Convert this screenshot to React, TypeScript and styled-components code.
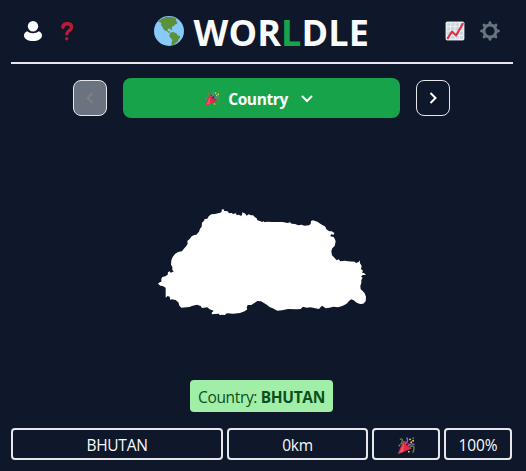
import React from "react";
import styled, { createGlobalStyle } from "styled-components";

const GlobalStyle = createGlobalStyle`
  * { box-sizing: border-box; }
  body {
    margin: 0;
    background: #0f172a;
    color: #f8fafc;
    font-family: "Open Sans", "Noto Sans", sans-serif;
    font-size: 15.5px;
    line-height: 24px;
  }
`;

const Page = styled.main`
  width: 502px;
  height: 471px;
  margin-left: 11px;
  display: flex;
  flex-direction: column;
  overflow: hidden;
`;

const Header = styled.header`
  height: 64px;
  flex: none;
  display: flex;
  align-items: center;
  justify-content: space-between;
  border-bottom: 2px solid #e5e7eb;
  padding: 0 13px 0 12px;
`;

const IconGroup = styled.div<{ $gap: number }>`
  display: flex;
  align-items: center;
  gap: ${(p) => p.$gap}px;
`;

const Brand = styled.div`
  display: flex;
  align-items: center;
  gap: 10px;
`;

const Title = styled.h1`
  margin: 3px 0 0;
  width: 175px;
  font-size: 36px;
  line-height: 40px;
  font-weight: 700;
  letter-spacing: 0.1px;
  white-space: nowrap;
`;

const Accent = styled.span`
  color: #16a34a;
`;

const RoundNav = styled.nav`
  display: flex;
  align-items: center;
  justify-content: center;
  gap: 16px;
  height: 40px;
  margin: 14px 1px 0 0;
  flex: none;
`;

const NavButton = styled.button`
  width: 34px;
  height: 36px;
  padding: 0;
  display: grid;
  place-items: center;
  border: 1px solid #e5e7eb;
  border-radius: 8px;
  background: transparent;
  color: #fff;
  &:disabled {
    background: #6b7280;
    color: #827f7d;
  }
`;

const RoundButton = styled.button`
  width: 277px;
  height: 40px;
  display: flex;
  align-items: center;
  padding: 1px 0 0 82px;
  border: 0;
  border-radius: 8px;
  background: #16a34a;
  color: #fff;
  font: 700 15.5px/24px "Open Sans", "Noto Sans", sans-serif;
`;

const RoundName = styled.span`
  margin: 0 12px 0 8px;
  width: 60px;
  letter-spacing: -0.4px;
  white-space: nowrap;
`;

const Shape = styled.div`
  height: 125px;
  margin: 82px 0 55px 139px;
  flex: none;
`;

const Answer = styled.div`
  align-self: center;
  width: 143px;
  height: 32px;
  margin-right: 1px;
  padding: 5px 0 0;
  border-radius: 4px;
  background: #a0eea8;
  color: #0b4f1a;
  text-align: center;
  letter-spacing: -0.35px;
  white-space: nowrap;
  flex: none;
`;

const GuessRow = styled.div`
  display: grid;
  grid-template-columns: 212px 141px 68px 68px;
  gap: 4px;
  margin-top: 16px;
`;

const Cell = styled.div<{ $tracking?: number }>`
  height: 32px;
  display: flex;
  align-items: center;
  justify-content: center;
  border: 2px solid #e5e7eb;
  border-radius: 4px;
  padding-top: 2px;
  letter-spacing: ${(p) => p.$tracking ?? 0}px;
`;

const UserIcon = () => (
  <svg width="20" height="22" viewBox="0 0 20 22" fill="#fff">
    <circle cx="10" cy="6.2" r="5.2" />
    <path d="M4.2 11.3C2.2 12 1 13.6 1 15.4C1 18.6 5 21 10 21S19 18.6 19 15.4C19 13.6 17.8 12 15.8 11.3C14.3 12.6 12.3 13.2 10 13.2S5.7 12.6 4.2 11.3Z" />
  </svg>
);

const QuestionIcon = () => (
  <svg width="20" height="20" viewBox="0 0 20 20">
    <path
      d="M5.9 6.2C6.2 3.7 7.9 2.7 10.2 2.7C13.1 2.7 14.6 4.3 14.6 6.3C14.6 9.9 9.9 9.3 9.8 12.9"
      fill="none"
      stroke="#be1931"
      strokeWidth="3.4"
      strokeLinecap="round"
    />
    <circle cx="9.7" cy="17.8" r="1.7" fill="#be1931" />
  </svg>
);

const Globe = () => (
  <svg width="30" height="30" viewBox="0 0 90 90">
    <circle cx="45" cy="45" r="45" fill="#88c9f9" />
    <path
      fill="#5c913b"
      d="M12 17C21 7 34 2 47 2L55 4L62 5L67 9L66 14L70 19L69 24L64 25L60 30L56 31L53 36L55 42L51 43L49 38L43 38L40 42L43 46L47 46L48 50L45 51L39 46L31 43L27 37L24 31L21 27L22 21L18 19Z"
    />
    <path
      fill="#5c913b"
      d="M48 51L55 48L64 50L69 54L71 58L78 61L78 66L74 70L71 77L65 81L58 88L53 87L53 80L55 72L50 66L46 61Z"
    />
  </svg>
);

const ChartIcon = () => (
  <svg width="20" height="20" viewBox="0 0 36 36">
    <rect x="1" y="1" width="34" height="34" rx="3" fill="#ccd6dd" />
    <path
      d="M3 3h30v30H3zM3 10h30M3 18h30M3 26h30M10 3v30M18 3v30M26 3v30"
      fill="none"
      stroke="#f5f8fa"
      strokeWidth="1.4"
    />
    <path
      d="M5 31L12.5 19L20 26L32 5"
      fill="none"
      stroke="#dd2e44"
      strokeWidth="3.8"
      strokeLinecap="round"
      strokeLinejoin="round"
    />
  </svg>
);

const GearIcon = () => (
  <svg width="20" height="20" viewBox="0 0 36 36">
    <g fill="#66757f">
      {[0, 45, 90, 135, 180, 225, 270, 315].map((angle) => (
        <path
          key={angle}
          d="M14.5 7L15.7 1.6Q18 -1.4 20.3 1.6L21.5 7Z"
          transform={`rotate(${angle} 18 18)`}
        />
      ))}
    </g>
    <circle cx="18" cy="18" r="10.9" fill="none" stroke="#66757f" strokeWidth="5.4" />
  </svg>
);

const Popper = ({ size }: { size: number }) => (
  <svg width={size} height={size} viewBox="0 0 36 36">
    <path fill="#dd2e44" d="M11.6 7.6L.2 34Q0 36 2 35.8L28.5 24.4Q25 12 11.6 7.6Z" />
    <path fill="#ea596e" d="M13 12L3 33L11 31Z" />
    <path fill="#a0041e" d="M14 9Q22 11 27 22Q22 22 18 18Q13 13 14 9Z" />
    <path
      d="M4 5Q10 2 9 8T5 15M25 20Q34 17 34 23T31 33"
      fill="none"
      stroke="#5c913b"
      strokeWidth="2.8"
    />
    <path
      d="M15 14Q24 9 18 1M21 19Q26 12 35 16"
      fill="none"
      stroke="#9266cc"
      strokeWidth="3"
    />
    <g fill="#ffcc4d">
      <circle cx="25.5" cy="5" r="2" />
      <circle cx="32" cy="8" r="2" />
      <circle cx="28" cy="11" r="1.8" />
      <circle cx="23" cy="31" r="1.8" />
    </g>
    <circle cx="3" cy="18" r="2" fill="#9266cc" />
    <circle cx="32" cy="2.5" r="1.8" fill="#5c913b" />
  </svg>
);

const Chevron = ({ d, width, height }: { d: string; width: number; height: number }) => (
  <svg width={width} height={height} viewBox={`0 0 ${width} ${height}`} fill="none" stroke="currentColor" strokeWidth="2">
    <path d={d} />
  </svg>
);

const CountryShape = () => (
  <svg width="225" height="125" viewBox="0 0 675 375" fill="#fff">
    <path d="M24 251L29 247L34 245L34 236L37 231L46 229L53 224L54 217L59 214L63 219L66 216L71 215L67 209L67 201L63 194L64 181L68 171L75 162L84 156L96 154L101 147L109 138L113 131L112 123L119 117L125 109L133 105L139 104L147 95L150 86L155 80L156 68L162 62L164 57L172 56L176 49L184 43L195 42L211 38L215 35L215 29L220 27L223 33L233 34L237 40L245 39L249 42L258 40L260 46L267 44L271 47L276 46L277 37L286 41L290 47L296 43L303 46L309 46L315 52L320 55L322 61L330 63L336 66L341 64L344 67L351 65L367 66L398 66L412 69L420 67L425 71L435 72L445 76L454 74L464 77L477 76L482 72L483 63L489 61L502 65L513 73L521 77L526 80L529 88L538 94L545 94L553 99L551 104L543 103L541 109L551 111L554 116L557 124L554 138L547 145L544 153L546 166L554 174L560 181L566 178L571 184L584 182L594 184L614 185L618 189L626 186L629 181L630 190L635 198L633 207L639 212L636 218L642 219L648 225L638 225L633 230L638 233L634 240L634 249L631 258L632 268L638 273L644 280L648 290L647 304L640 311L630 312L620 308L611 301L604 298L597 303L590 311L577 318L564 322L550 320L538 323L527 325L516 317L512 321L507 327L496 325L482 322L470 323L459 320L452 327L440 328L414 327L396 331L382 332L368 325L360 322L348 313L333 304L322 303L313 309L304 315L293 315L290 323L292 328L284 334L270 339L250 341L230 340L225 345L214 344L210 346L206 341L193 342L186 343L185 338L191 332L179 328L172 322L156 324L152 318L141 314L128 317L118 321L94 323L87 316L86 308L77 300L65 298L61 300L59 290L53 288L47 293L47 263L38 258L31 257Z" />
  </svg>
);

export default function App() {
  return (
    <>
      <GlobalStyle />
      <Page>
        <Header>
          <IconGroup $gap={14}>
            <UserIcon />
            <QuestionIcon />
          </IconGroup>
          <Brand>
            <Globe />
            <Title>
              WOR<Accent>L</Accent>DLE
            </Title>
          </Brand>
          <IconGroup $gap={15}>
            <ChartIcon />
            <GearIcon />
          </IconGroup>
        </Header>
        <RoundNav>
          <NavButton disabled aria-label="Previous round">
            <Chevron width={8} height={12} d="M6.5 1L1.5 6L6.5 11" />
          </NavButton>
          <RoundButton>
            <Popper size={15} />
            <RoundName>Country</RoundName>
            <Chevron width={14} height={10} d="M2 2L7 7L12 2" />
          </RoundButton>
          <NavButton aria-label="Next round">
            <Chevron width={8} height={12} d="M1.5 1L6.5 6L1.5 11" />
          </NavButton>
        </RoundNav>
        <Shape>
          <CountryShape />
        </Shape>
        <Answer>
          Country: <b>BHUTAN</b>
        </Answer>
        <GuessRow>
          <Cell $tracking={-0.25}>BHUTAN</Cell>
          <Cell $tracking={-0.25}>0km</Cell>
          <Cell>
            <Popper size={17} />
          </Cell>
          <Cell $tracking={-0.1}>100%</Cell>
        </GuessRow>
      </Page>
    </>
  );
}
